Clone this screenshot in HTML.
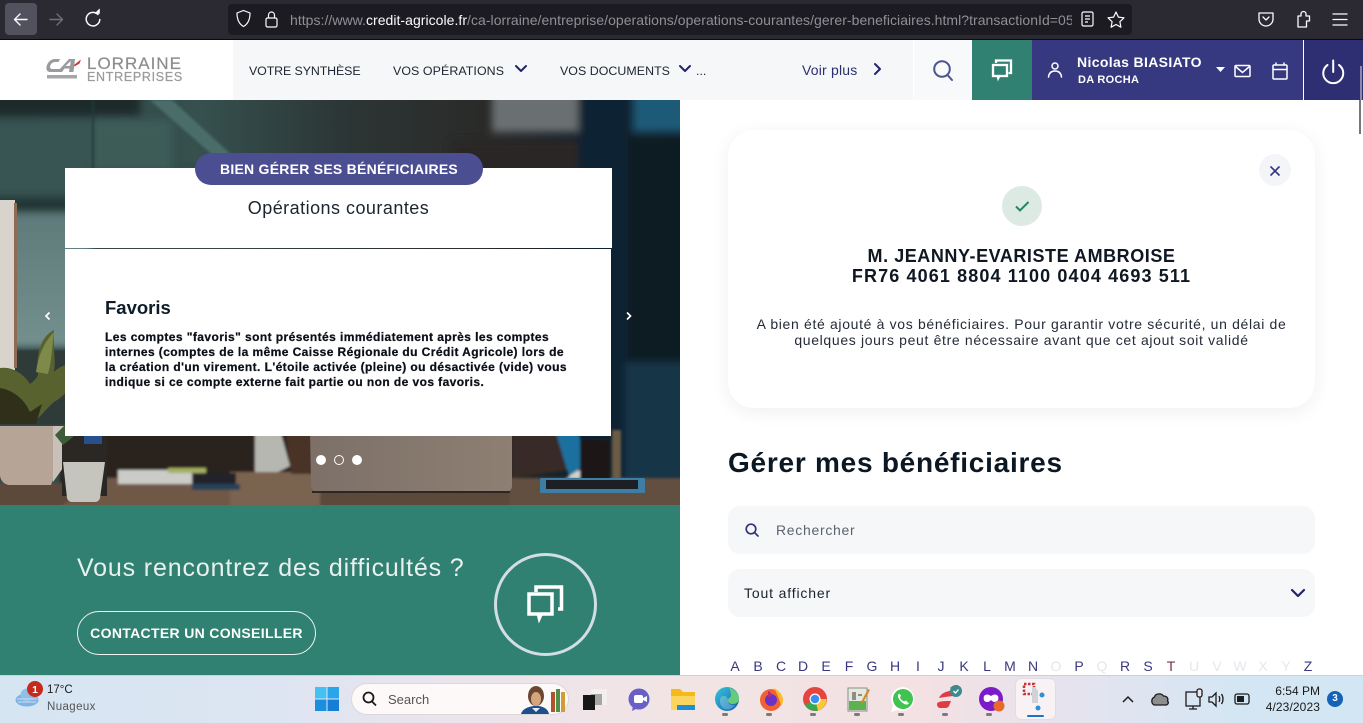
<!DOCTYPE html>
<html lang="fr"><head><meta charset="utf-8"><title>Gérer mes bénéficiaires</title>
<style>
html,body{margin:0;padding:0;width:1363px;height:723px;overflow:hidden;background:#fff}
body{position:relative;font-family:"Liberation Sans",sans-serif;color:#0d1a26}
.a{position:absolute;white-space:nowrap}
svg{position:absolute;display:block;overflow:visible}
.nav{font-size:12.4px;color:#1d2530;top:63.500px;line-height:15px}
.ab{position:absolute;top:658px;font-size:14px;line-height:16px;color:#3a3880;width:16px;text-align:center}
.ab.d{color:#e6e7ec}
</style></head><body>

<!-- Browser chrome -->
<div class="a" style="left:0;top:0;width:1363px;height:39px;background:#2b2a33"></div>
<div class="a" style="left:0;top:39px;width:1363px;height:1px;background:#0c0c0d"></div>
<div class="a" style="left:5px;top:3px;width:32px;height:32px;border-radius:4px;background:#52525e"></div>
<svg style="left:0;top:0" width="130" height="39" fill="none" stroke-linecap="round" stroke-linejoin="round">
<path d="M27 19.500H15M20 14l-5.500 5.500L20 25" stroke="#fbfbfe" stroke-width="1.400"/>
<path d="M50 19.500h12M57 14l5.500 5.500L57 25" stroke="#6f6f78" stroke-width="1.400"/>
<path d="M98 14.500a6.800 6.800 0 1 0 1.800 5" stroke="#fbfbfe" stroke-width="1.500"/><path d="M95 13.500h4.500V9z" fill="#fbfbfe" stroke="#fbfbfe" stroke-width=".6"/>
</svg>
<div class="a" style="left:228px;top:4px;width:904px;height:31px;border-radius:4px;background:#1c1b22"></div>
<svg style="left:228px;top:4px" width="904" height="31" fill="none" stroke="#fbfbfe" stroke-width="1.200">
<path d="M9 9l6.500-2.500L22 9c0 7-2 11-6.500 13.500C11 20 9 16 9 9z"/>
<rect x="38" y="14" width="11" height="9" rx="1.500"/><path d="M40.500 14v-3a3 3 0 0 1 6 0v3"/>
<rect x="854" y="8" width="11" height="14" rx="1.500"/><path d="M857 12h5M857 15h5M857 18h3"/>
<path d="M888 8l2.400 5.100 5.600.7-4.100 3.900 1 5.500-4.900-2.700-4.900 2.700 1-5.500-4.100-3.900 5.600-.7z" stroke-linejoin="round"/>
</svg>
<div class="a" style="left:290px;top:11px;width:782px;overflow:hidden;font-size:14px;line-height:18px;color:#8f8f96;letter-spacing:.04px">https://www.<span style="color:#fbfbfe">credit-agricole.fr</span>/ca-lorraine/entreprise/operations/operations-courantes/gerer-beneficiaires.html?transactionId=05f</div>
<svg style="left:1255px;top:8px" width="100" height="24" fill="none" stroke="#fbfbfe" stroke-width="1.300" stroke-linecap="round" stroke-linejoin="round">
<path d="M4 5h14v6a7 7 0 0 1-14 0z"/><path d="M8 9l3 3 3-3"/>
<path d="M43 19V8h3V6a2.500 2.500 0 0 1 5 0v2h3.500v5h-3v6z"/>
<path d="M78 6h14M78 11.500h14M78 17h14"/>
</svg>

<!-- Site header -->
<div class="a" style="left:0;top:40px;width:233px;height:60px;background:#fff"></div>
<div class="a" style="left:233px;top:40px;width:680px;height:60px;background:#f6f7f9"></div>
<div class="a" style="left:913px;top:40px;width:59px;height:60px;background:#f8f9fb;border-left:1px solid #fff;box-sizing:border-box"></div>
<div class="a" style="left:972px;top:40px;width:60px;height:60px;background:#318172"></div>
<div class="a" style="left:1032px;top:40px;width:271px;height:60px;background:#363880"></div>
<div class="a" style="left:1303px;top:40px;width:1px;height:60px;background:#fff"></div>
<div class="a" style="left:1304px;top:40px;width:59px;height:60px;background:#2e2f72"></div>
<div class="a" style="left:1360px;top:66px;width:2px;height:34px;background:#8a8aa8"></div>
<svg style="left:44px;top:56px" width="40" height="26" viewBox="0 0 40 26">
<path d="M16 3H11C6 3 2 8 2.500 13c.3 2 2 3 4 3H17l2-3H8.500c-2 0-2.800-1-2.300-3C7 7 9 6 12 6h2.500z" fill="#9a9b9d"/>
<path d="M13 16L25 3h6l-1.500 13h-4.500l.5-3.500h-5L18 16zM21.500 10H26l.7-5z" fill="#9a9b9d"/>
<path d="M30 9l7-5.500-1.500 4-5 3z" fill="#d3322f"/>
<rect x="3" y="19" width="30" height="3.500" fill="#a5a6a8"/>
</svg>
<div class="a" style="left:87px;top:55px;font-size:17px;line-height:17px;color:#8c8d8f;letter-spacing:1px;-webkit-text-stroke:.2px #8c8d8f">LORRAINE</div>
<div class="a" style="left:87px;top:71px;font-size:12.500px;line-height:12px;color:#9b9c9e;letter-spacing:.7px;-webkit-text-stroke:.25px #9b9c9e">ENTREPRISES</div>
<div class="a nav" style="left:249px;letter-spacing:-.1px">VOTRE SYNTHÈSE</div>
<div class="a nav" style="left:393px;letter-spacing:.08px">VOS OPÉRATIONS</div>
<div class="a nav" style="left:560px;letter-spacing:.04px">VOS DOCUMENTS</div>
<div class="a nav" style="left:696px">...</div>
<div class="a" style="left:802px;top:62px;font-size:14px;line-height:16px;color:#2c2f6e;letter-spacing:.2px">Voir plus</div>
<svg style="left:510px;top:60px" width="390" height="20" fill="none" stroke="#22246a" stroke-width="2" stroke-linecap="round" stroke-linejoin="round">
<path d="M6 6l5 5 5-5"/><path d="M170 6l5 5 5-5"/><path d="M365 4l5 5-5 5"/>
</svg>
<svg style="left:930px;top:58px" width="26" height="26" fill="none" stroke="#4c5490" stroke-width="2" stroke-linecap="round"><circle cx="12" cy="11" r="7.800"/><path d="M17.500 17l4.500 5"/></svg>
<svg style="left:990px;top:58px" width="26" height="24" fill="none" stroke="#fff" stroke-width="2.300"><path d="M6 5V2.500h15V15h-2.500"/><rect x="3" y="7" width="14" height="11"/><path d="M7 18l1 4 2-4z" fill="#fff" stroke-width="1"/></svg>
<svg style="left:1046px;top:60px" width="20" height="20" fill="none" stroke="#fff" stroke-width="1.500" stroke-linecap="round"><circle cx="9" cy="6" r="3"/><path d="M2.500 17c.5-4 3-6 6.500-6s6 2 6.500 6"/></svg>
<div class="a" style="left:1077px;top:54px;font-size:14px;line-height:16px;color:#fff;font-weight:bold;letter-spacing:.35px">Nicolas BIASIATO</div>
<div class="a" style="left:1078px;top:73px;font-size:11px;line-height:14px;color:#fff;font-weight:bold;letter-spacing:.3px">DA ROCHA</div>
<svg style="left:1214px;top:60px" width="140" height="24" fill="none" stroke="#fff" stroke-width="1.500">
<path d="M2 7h9l-4.500 5z" fill="#fff" stroke="none"/>
<rect x="21" y="5.500" width="15" height="11" rx="1"/><path d="M21.500 6.500l7 6 7-6"/>
<rect x="59" y="5" width="14" height="14" rx="1"/><path d="M59 9.500h14M62 2.500v3M70 2.500v3"/>
<path d="M113.500 5a10 10 0 1 0 11.500 0" stroke-width="2" stroke-linecap="round"/><path d="M119.200 .5v11.500" stroke-width="2" stroke-linecap="round"/>
</svg>

<!-- Hero photo -->
<svg style="left:0;top:100px;overflow:hidden" width="680" height="405" viewBox="0 0 680 405">
<defs>
<filter id="b1" x="-20%" y="-20%" width="140%" height="140%"><feGaussianBlur stdDeviation="4"/></filter>
<filter id="b2" x="-20%" y="-20%" width="140%" height="140%"><feGaussianBlur stdDeviation="1.200"/></filter>
<linearGradient id="bg" x1="0" x2="1"><stop offset="0" stop-color="#33494a"/><stop offset=".3" stop-color="#35504d"/><stop offset=".5" stop-color="#2c3636"/><stop offset=".72" stop-color="#2a2a28"/><stop offset=".85" stop-color="#14202a"/><stop offset="1" stop-color="#101a22"/></linearGradient>
<linearGradient id="lap" x1="0" x2="1"><stop offset="0" stop-color="#7d7068"/><stop offset="1" stop-color="#8d7f72"/></linearGradient>
<linearGradient id="win" x1="0" y1="0" x2="0" y2="1"><stop offset="0" stop-color="#5e7a7a"/><stop offset="1" stop-color="#73908e"/></linearGradient>
</defs>
<rect width="680" height="405" fill="url(#bg)"/>
<g filter="url(#b1)">
<rect x="-10" y="-10" width="150" height="26" fill="#1e2c2c"/>
<rect x="-10" y="112" width="100" height="135" fill="url(#win)"/>
<rect x="-10" y="98" width="110" height="15" fill="#223434"/>
<rect x="-10" y="22" width="100" height="72" fill="#375452"/>
<rect x="92" y="20" width="80" height="80" fill="#3d5b59"/>
<rect x="492" y="-10" width="86" height="42" fill="#6a7072"/>
<rect x="450" y="40" width="130" height="100" fill="#2a2826"/>
<rect x="633" y="-10" width="60" height="42" fill="#1c5a78"/>
<rect x="578" y="-10" width="52" height="400" fill="#0f2230"/>
<rect x="628" y="36" width="60" height="300" fill="#0e1a22"/>
<rect x="625" y="262" width="65" height="120" fill="#153446"/>
<rect x="90" y="70" width="400" height="80" fill="#2e3a3a" opacity=".4"/>
</g>
<g filter="url(#b2)">
<path d="M150 0L172 0L250 72L232 72z" fill="#4c6d6b"/>
<rect x="92" y="0" width="2" height="108" fill="#27393a"/>
<rect x="-5" y="250" width="75" height="75" fill="#2f3a38"/>
<rect x="60" y="330" width="255" height="55" fill="#2b241f"/>
<rect x="-10" y="383" width="700" height="32" fill="#5d4a3b"/>
<path d="M100 378h210v37H50z" fill="#6f5846"/>
<path d="M230 372h90v43H230z" fill="#7a6350"/>
<rect x="510" y="378" width="180" height="37" fill="#64503f"/>
<rect x="118" y="370" width="86" height="14" fill="#cbcbc8"/>
<rect x="168" y="368" width="38" height="5" fill="#a4b062"/>
<rect x="192" y="373" width="44" height="13" fill="#222329"/>
<rect x="192" y="384" width="48" height="6" fill="#26435a"/>
<path d="M255 330h25l10 36-12 6h-23z" fill="#b7b7b2"/>
<path d="M285 330h30v44h-24z" fill="#4a3226"/>
<path d="M512 330h55v40l-55 8z" fill="#392a25"/>
<path d="M555 330h24l4 36-14 10z" fill="#1e6f9f"/>
<path d="M566 378l12-8 12 3 5 6z" fill="#d3d4d2"/>
<rect x="612" y="330" width="9" height="52" fill="#6c5c44"/>
<rect x="580" y="340" width="30" height="40" fill="#1d1712"/>
</g>
<path d="M310 330h202v56a6 6 0 0 1-6 6H318a7 7 0 0 1-7-7z" fill="url(#lap)"/>
<rect x="312" y="391" width="198" height="2" fill="#2d2622"/>
<rect x="540" y="378" width="105" height="15" rx="1.500" fill="#3f7ea4"/><rect x="546" y="380" width="92" height="9" fill="#1c2025"/>
<rect x="0" y="100" width="15" height="170" fill="#d9d3cd"/><rect x="14" y="103" width="3" height="165" fill="#8e6b52"/>
<path d="M0 326h57l6 0-1 42-9 12-2 5H10a10 10 0 0 1-10-10z" fill="#b6a497"/><path d="M53 326h11l-1 42-10 14z" fill="#c9c0ba"/>
<path d="M0 268c12-2 24 6 30 16 4-3 6-5 8-9-2-20 2-38 16-45-1 18 2 30 0 42 8-8 18-9 26-8-3 16-12 30-26 38-5 4-14 15-22 22H0z" fill="#58622f"/>
<path d="M0 288c12 2 24 10 30 24l12-8-6 20H0z" fill="#30301a"/>
<path d="M36 272c2-16 8-30 18-40-2 14-2 28-6 42z" fill="#7d8a4a"/>
<rect x="62" y="336" width="45" height="60" fill="#2a2724"/>
<path d="M55 335l12-12 12 2-6 12-10 8z" fill="#3d5c38"/>
<path d="M63 362h42l-5 36a5 5 0 0 1-5 4H72a5 5 0 0 1-5-4z" fill="#c5c5be"/>
<rect x="84" y="336" width="18" height="8" fill="#27508c"/>
</svg>
<!-- Hero cards -->
<div class="a" style="left:65px;top:168px;width:547px;height:80px;background:#fff"></div>
<div class="a" style="left:65px;top:249px;width:546px;height:187px;background:#fff"></div>
<div class="a" style="left:195px;top:153px;width:288px;height:32px;border-radius:16px;background:#4c4e92;color:#fff;font-weight:bold;font-size:14px;line-height:32px;text-align:center;letter-spacing:.25px">BIEN GÉRER SES BÉNÉFICIAIRES</div>
<div class="a" style="left:65px;top:198px;width:547px;text-align:center;font-size:18px;line-height:20px;color:#1b2530;letter-spacing:.47px">Opérations courantes</div>
<div class="a" style="left:105px;top:298px;font-size:18.500px;line-height:20px;font-weight:bold;color:#0e1b28">Favoris</div>
<div class="a" style="left:105px;top:330px;font-size:12px;line-height:15px;font-weight:bold;color:#0b0f18;letter-spacing:.42px;-webkit-text-stroke:.25px #0b0f18">Les comptes "favoris" sont présentés immédiatement après les comptes<br>internes (comptes de la même Caisse Régionale du Crédit Agricole) lors de<br>la création d'un virement. L'étoile activée (pleine) ou désactivée (vide) vous<br>indique si ce compte externe fait partie ou non de vos favoris.</div>
<svg style="left:40px;top:308px" width="600" height="16" fill="none" stroke="#fff" stroke-width="1.700"><path d="M9.500 4.500L6 8l3.500 3.500"/><path d="M587 4.500L590.500 8 587 11.500"/></svg>
<div class="a" style="left:316px;top:455px;width:10px;height:10px;border-radius:50%;background:#fff"></div>
<div class="a" style="left:334px;top:455px;width:8px;height:8px;border-radius:50%;border:1px solid #fff"></div>
<div class="a" style="left:352px;top:455px;width:10px;height:10px;border-radius:50%;background:#fff"></div>

<!-- Green section -->
<div class="a" style="left:0;top:505px;width:680px;height:170px;background:#318172"></div>
<div class="a" style="left:77px;top:553px;font-size:25px;line-height:30px;color:#e9f1f0;letter-spacing:.85px">Vous rencontrez des difficultés ?</div>
<div class="a" style="left:77px;top:611px;width:237px;height:42px;border:1.500px solid #eef4f3;border-radius:22px;color:#fff;font-size:14px;font-weight:bold;line-height:42px;text-align:center;letter-spacing:.33px">CONTACTER UN CONSEILLER</div>
<div class="a" style="left:494px;top:553px;width:97px;height:97px;border:3px solid #d3dde6;border-radius:50%"></div>
<svg style="left:525px;top:585px" width="42" height="40" fill="none" stroke="#fff" stroke-width="3.500"><path d="M11 7V2h25.500V24H33"/><rect x="4" y="9" width="23" height="20"/><path d="M12 29l2 8 3.500-8z" fill="#fff" stroke-width="1"/></svg>

<!-- Right column -->
<div class="a" style="left:1359px;top:100px;width:2px;height:34px;background:#777"></div>
<div class="a" style="left:728px;top:130px;width:587px;height:278px;border-radius:26px;background:#fff;box-shadow:0 4px 18px rgba(30,40,80,.07)"></div>
<div class="a" style="left:1259px;top:154px;width:32px;height:32px;border-radius:50%;background:#f4f5f8"></div>
<svg style="left:1269px;top:165px" width="13" height="13" fill="none" stroke="#33357e" stroke-width="1.600"><path d="M1.500 1.500l9 9M10.500 1.500l-9 9"/></svg>
<div class="a" style="left:1002px;top:186px;width:40px;height:40px;border-radius:50%;background:#dceae3"></div>
<svg style="left:1015px;top:200px" width="15" height="13" fill="none" stroke="#1f8a5c" stroke-width="2"><path d="M1 6.500L5 10.500 13.500 2"/></svg>
<div class="a" style="left:728px;top:246px;width:587px;text-align:center;font-size:18px;line-height:20px;font-weight:bold;color:#0e1722"><span style="letter-spacing:.55px">M. JEANNY-EVARISTE AMBROISE</span><br><span style="letter-spacing:1.120px">FR76 4061 8804 1100 0404 4693 511</span></div>
<div class="a" style="left:728px;top:316px;width:587px;text-align:center;font-size:14px;line-height:16px;color:#242c38;letter-spacing:.66px">A bien été ajouté à vos bénéficiaires. Pour garantir votre sécurité, un délai de<br>quelques jours peut être nécessaire avant que cet ajout soit validé</div>
<div class="a" style="left:728px;top:446px;font-size:28px;line-height:34px;font-weight:bold;color:#0b1824;letter-spacing:.75px">Gérer mes bénéficiaires</div>
<div class="a" style="left:728px;top:506px;width:587px;height:48px;border-radius:12px;background:#f6f7f9"></div>
<svg style="left:744px;top:522px" width="18" height="18" fill="none" stroke="#33357e" stroke-width="1.700" stroke-linecap="round"><circle cx="7" cy="7" r="4.800"/><path d="M10.500 10.500l3.500 3.500"/></svg>
<div class="a" style="left:776px;top:522px;font-size:14px;line-height:16px;color:#5c6470;letter-spacing:.7px">Rechercher</div>
<div class="a" style="left:728px;top:569px;width:587px;height:48px;border-radius:12px;background:#f6f7f9"></div>
<div class="a" style="left:744px;top:585px;font-size:14px;line-height:16px;color:#1a222e;letter-spacing:.85px">Tout afficher</div>
<svg style="left:1290px;top:587px" width="16" height="12" fill="none" stroke="#22246a" stroke-width="2.200" stroke-linecap="round" stroke-linejoin="round"><path d="M2 3l6 6 6-6"/></svg>
<div class="ab" style="left:727px">A</div><div class="ab" style="left:750px">B</div><div class="ab" style="left:773px">C</div><div class="ab" style="left:795px">D</div><div class="ab" style="left:818px">E</div><div class="ab" style="left:841px">F</div><div class="ab" style="left:864px">G</div><div class="ab" style="left:887px">H</div><div class="ab" style="left:910px">I</div><div class="ab" style="left:933px">J</div><div class="ab" style="left:956px">K</div><div class="ab" style="left:979px">L</div><div class="ab" style="left:1002px">M</div><div class="ab" style="left:1025px">N</div><div class="ab d" style="left:1048px">O</div><div class="ab" style="left:1071px">P</div><div class="ab d" style="left:1094px">Q</div><div class="ab" style="left:1117px">R</div><div class="ab" style="left:1140px">S</div><div class="ab" style="left:1163px;color:#7a3040">T</div><div class="ab d" style="left:1186px">U</div><div class="ab d" style="left:1209px">V</div><div class="ab d" style="left:1232px">W</div><div class="ab d" style="left:1255px">X</div><div class="ab d" style="left:1278px">Y</div><div class="ab" style="left:1300px">Z</div>

<!-- Taskbar -->
<div class="a" style="left:0;top:675px;width:1363px;height:48px;background:linear-gradient(90deg,#d6e5f2 0%,#dde5f2 20%,#ece4ec 35%,#f2e4e4 50%,#f3e1e3 68%,#e6e3ee 78%,#d5e6f3 90%,#d2e6f4 100%);border-top:1px solid #c9d0d6;box-sizing:border-box"></div>
<svg style="left:14px;top:680px" width="30" height="30"><ellipse cx="13" cy="20" rx="11.500" ry="6.500" fill="#7fb3e3"/><circle cx="13" cy="15" r="6.500" fill="#8fbee6"/><path d="M3 19h20M4 22h18" stroke="#cfe2f3" stroke-width="1"/><circle cx="21" cy="9" r="8" fill="#c42b1c"/><text x="21" y="13" text-anchor="middle" font-family="Liberation Sans" font-size="10.500" font-weight="bold" fill="#fff">1</text></svg>
<div class="a" style="left:47px;top:684px;font-size:11.500px;line-height:13px;color:#1b1b1b">17°C</div>
<div class="a" style="left:47px;top:700px;font-size:11.500px;line-height:14px;color:#555;letter-spacing:.4px">Nuageux</div>
<svg style="left:315px;top:687px" width="24" height="24"><rect width="11.500" height="11.500" fill="#45c0f2"/><rect x="12.500" width="11.500" height="11.500" fill="#29a5ec"/><rect y="12.500" width="11.500" height="11.500" fill="#1b8ee0"/><rect x="12.500" y="12.500" width="11.500" height="11.500" fill="#157fd6"/></svg>
<div class="a" style="left:352px;top:684px;width:216px;height:30px;border-radius:15px;background:#fcf9f8;box-shadow:0 0 0 1px #ddd8d8"></div>
<svg style="left:362px;top:691px" width="16" height="16" fill="none" stroke="#1a1a1a" stroke-width="1.800"><circle cx="6.500" cy="6.500" r="5"/><path d="M10 10.500l4 4"/></svg>
<div class="a" style="left:388px;top:692px;font-size:13px;line-height:15px;color:#555">Search</div>
<svg style="left:518px;top:684px" width="52" height="30"><path d="M3 30c2-6 8-7 12-8h6c5 1 9 3 10 8z" fill="#1d4f8f"/><ellipse cx="18" cy="12" rx="8" ry="10" fill="#6b4632"/><ellipse cx="18" cy="15" rx="5" ry="7" fill="#d5a57e"/><path d="M14 24l4 4 4-4z" fill="#eee"/><rect x="33" y="8" width="4" height="20" fill="#b5502e"/><rect x="38" y="5" width="4" height="23" fill="#4f8f4a"/><rect x="43" y="8" width="4" height="20" fill="#d19c38"/></svg>
<svg style="left:583px;top:689px" width="24" height="22"><rect x="8" y="0" width="16" height="16" fill="#f2efee"/><rect x="8" y="5" width="11" height="11" fill="#a5a5a5"/><rect x="0" y="6" width="12" height="15" fill="#161616"/></svg>
<svg style="left:628px;top:688px" width="24" height="24"><circle cx="11" cy="11" r="10.500" fill="#6a5fc7"/><path d="M5 18l-1 5 6-3z" fill="#6a5fc7"/><rect x="6" y="7" width="9" height="8" rx="2" fill="#fff"/><path d="M15 10l4-2v6l-4-2z" fill="#fff"/></svg>
<svg style="left:671px;top:687px" width="24" height="24"><path d="M0 2h9l3 3h12v18H0z" fill="#f5b919"/><rect x="0" y="9" width="24" height="14" fill="#fcd55f"/><rect x="6" y="18" width="18" height="5" fill="#1b8fd8"/></svg>
<svg style="left:715px;top:687px" width="24" height="25"><defs><linearGradient id="ed" x1="0" y1="0" x2="1" y2="1"><stop offset="0" stop-color="#38c6d8"/><stop offset="1" stop-color="#0f5fb0"/></linearGradient></defs><circle cx="12" cy="12" r="12" fill="url(#ed)"/><path d="M14 1c6 1 10 6 10 11 0 3-3 5-6 5-4 0-5-2-5-4s3-2 3-5-1-6-2-7z" fill="#66cc77"/><path d="M6 10c3-2 7-1 7 4 0 3 3 5 7 4-3 4-8 6-12 3-3-3-4-8-2-11z" fill="#fff" opacity=".25"/></svg>
<svg style="left:759px;top:687px" width="24" height="24"><circle cx="12" cy="13" r="11" fill="#f0622f"/><path d="M15 1c6 3 9 8 9 12 0 3-1 5-2 6-1-6-4-12-7-18z" fill="#fcbc2d"/><circle cx="12" cy="13" r="6" fill="#6b32c8"/><path d="M9 4c3 1 4 3 4 5l-4 1z" fill="#b92b7a"/></svg>
<svg style="left:803px;top:687px" width="24" height="24"><circle cx="12" cy="12" r="12" fill="#e5453c"/><path d="M12 12L2 18a12 12 0 0 0 13 5.600z" fill="#35a853"/><path d="M12 12h11.500A12 12 0 0 1 15 23.600z" fill="#fcc934"/><circle cx="12" cy="12" r="5.500" fill="#fff"/><circle cx="12" cy="12" r="4.300" fill="#3f8cf0"/></svg>
<svg style="left:847px;top:686px" width="24" height="26"><rect x="1" y="2" width="19" height="23" fill="#e6e8df" stroke="#8b8f85"/><rect x="2" y="15" width="17" height="9" fill="#5cb24f"/><path d="M6 6v8M8 6v8M11 9h4" stroke="#333" stroke-width="1"/><path d="M14 16l7-13 2 1-7 13z" fill="#d38a2a"/></svg>
<svg style="left:891px;top:687px" width="24" height="25"><path d="M12 0a12 12 0 0 0-10 18.500L0 25l6.500-2A12 12 0 1 0 12 0z" fill="#fff"/><circle cx="12" cy="12" r="10" fill="#40c351"/><path d="M8 6.500c-2 2-1 5 2 8s6 4 8 2l-3-3-2 1c-2-1-3-2-4-4l1-2z" fill="#fff"/></svg>
<svg style="left:935px;top:684px" width="28" height="26"><path d="M2 20c0-3 8-3 14-3l-2 5c-1 2-3 2-5 2H5c-2 0-3-2-3-4zM4 14c2-5 9-8 19-8l-3 6c-5 0-16 2-16 2zM15 4c2-2 4-3 8-3l-2 4z" fill="#df3d44"/><circle cx="21" cy="7" r="6" fill="#3d8a8c"/><path d="M18.500 7l2 2 3-3.500" stroke="#fff" stroke-width="1.300" fill="none"/></svg>
<svg style="left:979px;top:687px" width="26" height="25"><circle cx="12" cy="12" r="12" fill="#7c1cc9"/><path d="M5 9c2-2 4-2 7 0 3-2 5-2 7 0 1 3 0 6-3 6-2 0-3-1-4-2-1 1-2 2-4 2-3 0-4-3-3-6z" fill="#fff"/><circle cx="20" cy="19" r="5.500" fill="#e8692a"/></svg>
<div class="a" style="left:1016px;top:679px;width:39px;height:40px;border-radius:5px;background:#f8f2f4;box-shadow:0 0 1px #bbb"></div>
<svg style="left:1024px;top:684px" width="26" height="28"><rect x="0" y="0" width="10" height="10" fill="none" stroke="#c93434" stroke-width="2.500" stroke-dasharray="2.500 1.500"/><path d="M8 3h3l3 4v12h-6z" fill="#cfd2d7"/><circle cx="18" cy="11" r="2.500" fill="#2f8ed8"/><circle cx="14" cy="24" r="2.500" fill="#2f8ed8"/></svg>
<div class="a" style="left:1027px;top:715px;width:17px;height:2px;border-radius:1px;background:#1a73c8"></div>
<svg style="left:722px;top:713px" width="280" height="4" fill="#7b7b7b"><rect width="6" height="3" rx="1.500"/><rect x="44" width="6" height="3" rx="1.500"/><rect x="88" width="6" height="3" rx="1.500"/><rect x="132" width="6" height="3" rx="1.500"/><rect x="176" width="6" height="3" rx="1.500"/><rect x="220" width="6" height="3" rx="1.500"/><rect x="264" width="6" height="3" rx="1.500"/></svg>
<svg style="left:1120px;top:688px" width="130" height="24" fill="none" stroke="#1c1c1c" stroke-width="1.300">
<path d="M3 14l5-5 5 5" stroke-width="1.500"/>
<path d="M34 17a4.500 4.500 0 0 1 .5-8c1-4 7-4 9-1 4 0 5 3 4 5 2 2 0 4-2 4z" fill="#8d8d8d"/>
<rect x="66" y="4" width="14" height="14"/><path d="M73 18v3M69 21h8"/><rect x="77" y="1" width="5" height="8" rx="2" fill="#f0e6ee"/>
<path d="M89 9h3l4-4v13l-4-4h-3zM99 8c1 2 1 4 0 6M101.500 6c2 3 2 7 0 10"/>
<rect x="115" y="6" width="14" height="10" rx="2"/><rect x="117" y="8" width="7" height="6" fill="#1c1c1c" stroke="none"/>
</svg>
<div class="a" style="left:1270px;top:684px;width:50px;text-align:right;font-size:12px;line-height:14px;color:#1a1a1a">6:54 PM</div>
<div class="a" style="left:1262px;top:700px;width:58px;text-align:right;font-size:12px;line-height:14px;color:#1a1a1a;letter-spacing:.1px">4/23/2023</div>
<div class="a" style="left:1327px;top:691px;width:16px;height:16px;border-radius:50%;background:#1562b8;color:#fff;font-size:10px;font-weight:bold;line-height:16px;text-align:center">3</div>
</body></html>
